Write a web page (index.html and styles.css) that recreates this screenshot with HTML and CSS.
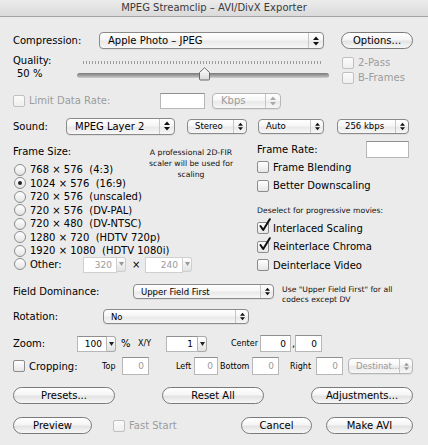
FILE: index.html
```html
<!DOCTYPE html>
<html>
<head>
<meta charset="utf-8">
<link rel="stylesheet" href="styles.css">
</head>
<body>
<div class="titlebar">MPEG Streamclip – AVI/DivX Exporter</div>
<div class="win">

  <div class="row r-comp">
    <span class="w-complbl">Compression:</span>
    <div class="popup w-comppop"><span class="pt">Apple Photo – JPEG</span><span class="pa"><svg width="6" height="10" viewBox="0 0 6 10"><path d="M0 4 L3 0.5 L6 4 Z M0 6 L3 9.5 L6 6 Z" fill="#111"/></svg></span></div>
    <div class="btn w-options">Options...</div>
  </div>

  <div class="row r-quality">
    <div class="qlbl">
      <div class="qline">Quality:</div>
      <div class="qline qval">50 %</div>
    </div>
    <div class="slider">
      <div class="ticks"></div>
      <div class="track"></div>
      <svg class="thumb" width="13" height="14" viewBox="0 0 13 14"><defs><linearGradient id="tg" x1="0" y1="0" x2="0" y2="1"><stop offset="0" stop-color="#ffffff"/><stop offset="1" stop-color="#d9d9d9"/></linearGradient></defs><path d="M1.5 5.5 L6.5 0.8 L11.5 5.5 V12 Q11.5 13 10.5 13 H2.5 Q1.5 13 1.5 12 Z" fill="url(#tg)" stroke="#6a6a6a"/></svg>
    </div>
    <div class="qchecks">
      <div class="qcrow"><span class="cb dis"></span><span class="cl dim">2-Pass</span></div>
      <div class="qcrow"><span class="cb dis"></span><span class="cl dim">B-Frames</span></div>
    </div>
  </div>

  <div class="row r-limit">
    <span class="cb dis"></span>
    <span class="w-limitlbl dim">Limit Data Rate:</span>
    <div class="fld w-rate"></div>
    <div class="popup dis w-kbps"><span class="pt">Kbps</span><span class="pa"><svg width="6" height="10" viewBox="0 0 6 10"><path d="M0 4 L3 0.5 L6 4 Z M0 6 L3 9.5 L6 6 Z" fill="#aaa"/></svg></span></div>
  </div>

  <div class="row r-sound">
    <span class="w-soundlbl">Sound:</span>
    <div class="popup w-mpeg"><span class="pt">MPEG Layer 2</span><span class="pa"><svg width="6" height="10" viewBox="0 0 6 10"><path d="M0 4 L3 0.5 L6 4 Z M0 6 L3 9.5 L6 6 Z" fill="#111"/></svg></span></div>
    <div class="popup sm w-stereo"><span class="pt">Stereo</span><span class="pa"><svg width="5" height="9" viewBox="0 0 6 10"><path d="M0 4 L3 0.5 L6 4 Z M0 6 L3 9.5 L6 6 Z" fill="#111"/></svg></span></div>
    <div class="popup sm w-auto"><span class="pt">Auto</span><span class="pa"><svg width="5" height="9" viewBox="0 0 6 10"><path d="M0 4 L3 0.5 L6 4 Z M0 6 L3 9.5 L6 6 Z" fill="#111"/></svg></span></div>
    <div class="popup sm w-kbit"><span class="pt">256 kbps</span><span class="pa"><svg width="5" height="9" viewBox="0 0 6 10"><path d="M0 4 L3 0.5 L6 4 Z M0 6 L3 9.5 L6 6 Z" fill="#111"/></svg></span></div>
  </div>

  <div class="frame">
    <div class="fleft">
      <div class="flabel">Frame Size:</div>
      <div class="radios">
        <div class="rrow"><span class="rd"></span><span class="rl">768 × 576  (4:3)</span></div>
        <div class="rrow"><span class="rd on"></span><span class="rl">1024 × 576  (16:9)</span></div>
        <div class="rrow"><span class="rd"></span><span class="rl">720 × 576  (unscaled)</span></div>
        <div class="rrow"><span class="rd"></span><span class="rl">720 × 576  (DV-PAL)</span></div>
        <div class="rrow"><span class="rd"></span><span class="rl">720 × 480  (DV-NTSC)</span></div>
        <div class="rrow"><span class="rd"></span><span class="rl">1280 × 720  (HDTV 720p)</span></div>
        <div class="rrow"><span class="rd"></span><span class="rl">1920 × 1080  (HDTV 1080i)</span></div>
        <div class="rrow">
          <span class="rd"></span><span class="rl w-other">Other:</span>
          <div class="combo dis"><div class="fld w-320">320</div><div class="ca"><svg width="5" height="4" viewBox="0 0 5 4"><path d="M0 0 H5 L2.5 4 Z" fill="#999"/></svg></div></div>
          <span class="times">×</span>
          <div class="combo dis"><div class="fld w-240">240</div><div class="ca"><svg width="5" height="4" viewBox="0 0 5 4"><path d="M0 0 H5 L2.5 4 Z" fill="#999"/></svg></div></div>
        </div>
      </div>
    </div>
    <div class="fmid">A professional 2D-FIR scaler will be used for scaling</div>
    <div class="fright">
      <div class="frrow"><span class="w-fratelbl">Frame Rate:</span><div class="fld w-frate"></div></div>
      <div class="crow"><span class="cb"></span><span class="cl">Frame Blending</span></div>
      <div class="crow"><span class="cb"></span><span class="cl">Better Downscaling</span></div>
      <div class="deselect">Deselect for progressive movies:</div>
      <div class="crow"><span class="cb"><svg width="14" height="15" viewBox="0 0 14 15"><path d="M2.5 8 L5.2 12 L11.8 1.2" fill="none" stroke="#111" stroke-width="2" stroke-linecap="round" stroke-linejoin="round"/></svg></span><span class="cl">Interlaced Scaling</span></div>
      <div class="crow"><span class="cb"><svg width="14" height="15" viewBox="0 0 14 15"><path d="M2.5 8 L5.2 12 L11.8 1.2" fill="none" stroke="#111" stroke-width="2" stroke-linecap="round" stroke-linejoin="round"/></svg></span><span class="cl">Reinterlace Chroma</span></div>
      <div class="crow"><span class="cb"></span><span class="cl">Deinterlace Video</span></div>
    </div>
  </div>

  <div class="row r-field">
    <span class="w-fieldlbl">Field Dominance:</span>
    <div class="popup sm w-field"><span class="pt">Upper Field First</span><span class="pa"><svg width="5" height="9" viewBox="0 0 6 10"><path d="M0 4 L3 0.5 L6 4 Z M0 6 L3 9.5 L6 6 Z" fill="#111"/></svg></span></div>
    <div class="note">Use "Upper Field First" for all<br>codecs except DV</div>
  </div>

  <div class="row r-rot">
    <span class="w-rotlbl">Rotation:</span>
    <div class="popup sm w-rot"><span class="pt">No</span><span class="pa"><svg width="5" height="9" viewBox="0 0 6 10"><path d="M0 4 L3 0.5 L6 4 Z M0 6 L3 9.5 L6 6 Z" fill="#111"/></svg></span></div>
  </div>

  <div class="row r-zoom">
    <span class="w-zoomlbl">Zoom:</span>
    <div class="combo"><div class="fld w-z100">100</div><div class="ca"><svg width="5" height="4" viewBox="0 0 5 4"><path d="M0 0 H5 L2.5 4 Z" fill="#222"/></svg></div></div>
    <span class="pct">%</span>
    <span class="small xy">X/Y</span>
    <div class="combo w-xycombo"><div class="fld w-z1">1</div><div class="ca"><svg width="5" height="4" viewBox="0 0 5 4"><path d="M0 0 H5 L2.5 4 Z" fill="#222"/></svg></div></div>
    <span class="small center">Center</span>
    <div class="fld w-c1">0</div>
    <span class="comma">,</span>
    <div class="fld w-c2">0</div>
  </div>

  <div class="row r-crop">
    <span class="cb"></span>
    <span class="w-croplbl">Cropping:</span>
    <span class="small w-top">Top</span>
    <div class="fld grey w-ctop">0</div>
    <span class="small m-left">Left</span>
    <div class="fld grey w-cleft">0</div>
    <span class="small m-bottom">Bottom</span>
    <div class="fld grey w-cbot">0</div>
    <span class="small m-right">Right</span>
    <div class="fld grey w-cright">0</div>
    <div class="popup sm dis w-dest"><span class="pt">Destinat...</span><span class="pa"><svg width="5" height="9" viewBox="0 0 6 10"><path d="M0 4 L3 0.5 L6 4 Z M0 6 L3 9.5 L6 6 Z" fill="#999"/></svg></span></div>
  </div>

  <div class="row r-btn1">
    <div class="btn w-big">Presets...</div>
    <div class="btn w-big m-btn">Reset All</div>
    <div class="btn w-big m-btn">Adjustments...</div>
  </div>

  <div class="row r-btn2">
    <div class="btn w-preview">Preview</div>
    <span class="cb dis m-fast"></span>
    <span class="cl dim">Fast Start</span>
    <div class="btn w-cancel">Cancel</div>
    <div class="btn w-make">Make AVI</div>
  </div>

</div>
</body>
</html>
```
FILE: styles.css
```css
* { box-sizing: border-box; }
html, body { margin: 0; padding: 0; }
body {
  width: 428px; height: 445px; overflow: hidden;
  background: #ebebeb;
  font-family: "DejaVu Sans", "Liberation Sans", sans-serif;
  font-size: 10px; color: #000;
}
.titlebar {
  height: 17px; border-bottom: 1px solid #a3a3a3;
  background: linear-gradient(#ececec, #dadada);
  text-align: center; font-size: 10px; line-height: 16px; color: #3a3a3a;
}
.win { padding: 0 15px 0 13px; }
.row { display: flex; align-items: center; }
.dim { color: #9c9c9c; }
.small { font-size: 8px; flex: none; white-space: nowrap; }

/* popups */
.popup {
  display: flex; align-items: stretch; flex: none;
  border: 1px solid #8a8a8a; border-radius: 4px;
  background: linear-gradient(#ffffff 0%, #f6f6f6 45%, #e9e9e9 55%, #f7f7f7 100%);
  box-shadow: 0 1px 0 rgba(0,0,0,0.06);
}
.popup .pt { flex: 1; padding-left: 8px; display: flex; align-items: center; white-space: nowrap; overflow: hidden; }
.popup .pa { width: 15px; border-left: 1px solid #c6c6c6; display: flex; align-items: center; justify-content: center; }
.popup.sm { font-size: 8.5px; }
.popup.sm .pt { padding-left: 7px; }
.popup.sm .pa { width: 13px; }
.popup.dis { border-color: #b5b5b5; color: #9c9c9c; }

/* buttons */
.btn {
  height: 17px; flex: none;
  border: 1px solid #7a7a7a; border-radius: 9px;
  background: linear-gradient(#ffffff 0%, #f5f5f5 45%, #e3e3e3 55%, #f7f7f7 100%);
  display: flex; align-items: center; justify-content: center;
  font-size: 10px;
}

/* checkbox / radio */
.cb {
  width: 12px; height: 12px; flex: none; position: relative;
  border: 1px solid #8c8c8c; border-radius: 2px;
  background: linear-gradient(#ffffff, #e6e6e6);
}
.cb.dis { border-color: #c0c0c0; background: linear-gradient(#fbfbfb, #efefef); }
.cb svg { position: absolute; left: 0; top: -5px; }
.cl { margin-left: 4px; white-space: nowrap; }
.rd {
  width: 12px; height: 12px; flex: none;
  border: 1px solid #8c8c8c; border-radius: 50%;
  background: linear-gradient(#ffffff, #e4e4e4);
  display: flex; align-items: center; justify-content: center;
}
.rd.on::after { content: ""; width: 4px; height: 4px; border-radius: 50%; background: #222; }

/* fields */
.fld {
  height: 16px; flex: none; background: #fff;
  border: 1px solid #b7b7b7; border-top-color: #8f8f8f;
  font-size: 9px; display: flex; align-items: center; justify-content: flex-end; padding-right: 4px;
}
.fld.grey { color: #9a9a9a; }
.combo { display: flex; flex: none; height: 16px; }
.combo .fld { height: 16px; }
.combo .ca {
  width: 9px; height: 16px; border: 1px solid #a9a9a9; border-left: none; border-radius: 0 3px 3px 0;
  background: linear-gradient(#ffffff, #e2e2e2);
  display: flex; align-items: center; justify-content: center;
}
.combo.dis .fld { color: #9a9a9a; border-color: #d0d0d0; }
.combo.dis .ca { border-color: #cfcfcf; }

/* row 1 */
.r-comp { margin-top: 15px; height: 17px; }
.w-complbl { width: 86px; }
.w-comppop { width: 225px; height: 17px; }
.w-options { width: 72px; margin-left: 17px; }

/* quality */
.r-quality { margin-top: 5px; height: 30px; align-items: flex-start; }
.qlbl { width: 64px; padding-top: 0; }
.qline { line-height: 13px; height: 13px; }
.qval { padding-left: 4px; }
.slider { position: relative; width: 252px; height: 30px; }
.ticks { margin: 7px 6px 0; height: 3px; background: repeating-linear-gradient(90deg, #9c9c9c 0 1px, transparent 1px 3px); }
.track { margin-top: 9px; height: 5px; border-radius: 3px; background: linear-gradient(#7a7a7a, #a8a8a8 60%, #d0d0d0); }
.thumb { position: absolute; left: 121px; top: 13px; }
.qchecks { margin-left: 13px; padding-top: 1px; }
.qcrow { display: flex; align-items: center; height: 15px; }

/* limit */
.r-limit { margin-top: 8px; height: 17px; }
.w-limitlbl { width: 131px; margin-left: 4px; }
.w-rate { width: 45px; }
.w-kbps { width: 69px; height: 16px; margin-left: 7px; }

/* sound */
.r-sound { margin-top: 8px; height: 18px; }
.w-soundlbl { width: 53px; }
.w-mpeg { width: 109px; height: 17px; }
.w-stereo { width: 60px; height: 15px; margin-left: 12px; }
.w-auto { width: 66px; height: 15px; margin-left: 11px; }
.w-kbit { width: 72px; height: 15px; margin-left: 13px; }

/* frame section */
.frame { display: flex; align-items: flex-start; margin-top: 5px; height: 136px; }
.fleft { width: 132px; flex: none; }
.flabel { margin-top: 5px; height: 13px; line-height: 13px; }
.radios { margin-top: 5px; }
.rrow { display: flex; align-items: center; height: 13.5px; padding-left: 1px; }
.rl { margin-left: 4px; white-space: pre; }
.w-other { width: 53px; flex: none; }
.w-320 { width: 34px; height: 15px; }
.w-240 { width: 38px; height: 15px; }
.rrow .combo, .rrow .combo .ca { height: 15px; }
.times { margin: 0 6px 0 6px; width: 7px; font-size: 10px; }
.fmid { width: 92px; flex: none; margin-top: 7px; text-align: center; font-size: 7.7px; line-height: 11px; color: #111; }
.fright { width: 153px; flex: none; margin-left: 19px; }
.frrow { display: flex; align-items: center; height: 18px; }
.w-fratelbl { width: 110px; padding-left: 1px; }
.w-frate { width: 43px; height: 17px; }
.crow { display: flex; align-items: center; height: 18.5px; padding-left: 1px; }
.deselect { margin-top: 8px; height: 16px; line-height: 16px; font-size: 7.7px; color: #111; padding-left: 1px; }

/* field */
.r-field { margin-top: 8px; height: 15px; }
.w-fieldlbl { width: 120px; }
.w-field { width: 141px; height: 15px; }
.note { align-self: flex-start; margin-left: 8px; font-size: 7.7px; line-height: 9.5px; margin-top: 1px; color: #111; white-space: nowrap; }

/* rotation */
.r-rot { margin-top: 10px; height: 15px; }
.w-rotlbl { width: 90px; }
.w-rot { width: 146px; height: 15px; }

/* zoom */
.r-zoom { margin-top: 11px; height: 17px; }
.w-zoomlbl { width: 64px; }
.w-z100 { width: 30px; }
.pct { margin-left: 5px; width: 9px; }
.xy { margin-left: 8px; width: 20px; }
.w-xycombo { margin-left: 8px; }
.w-z1 { width: 32px; }
.center { margin-left: 24px; width: 29px; }
.w-c1 { width: 31px; height: 17px; }
.comma { width: 3px; margin: 0 0 0 1px; }
.w-c2 { width: 27px; height: 17px; }

/* crop */
.r-crop { margin-top: 5px; height: 18px; }
.w-croplbl { width: 77px; margin-left: 4px; }
.w-top { width: 17px; }
.w-ctop { width: 27px; height: 18px; margin-left: 3px; }
.m-left { margin-left: 27px; width: 17px; }
.w-cleft { width: 24px; height: 18px; margin-left: 1px; }
.m-bottom { margin-left: 2px; width: 30px; }
.w-cbot { width: 27px; height: 18px; margin-left: 2px; }
.m-right { margin-left: 11px; width: 22px; }
.w-cright { width: 27px; height: 18px; margin-left: 4px; }
.w-dest { width: 65px; height: 16px; margin-left: 5px; }

/* buttons */
.r-btn1 { margin-top: 12px; height: 17px; }
.w-big { width: 102px; }
.m-btn { margin-left: 47px; }
.r-btn2 { margin-top: 13px; height: 17px; }
.w-preview { width: 79px; }
.m-fast { margin-left: 21px; }
.w-cancel { width: 71px; margin-left: auto; }
.w-make { width: 87px; margin-left: 14px; }
```
